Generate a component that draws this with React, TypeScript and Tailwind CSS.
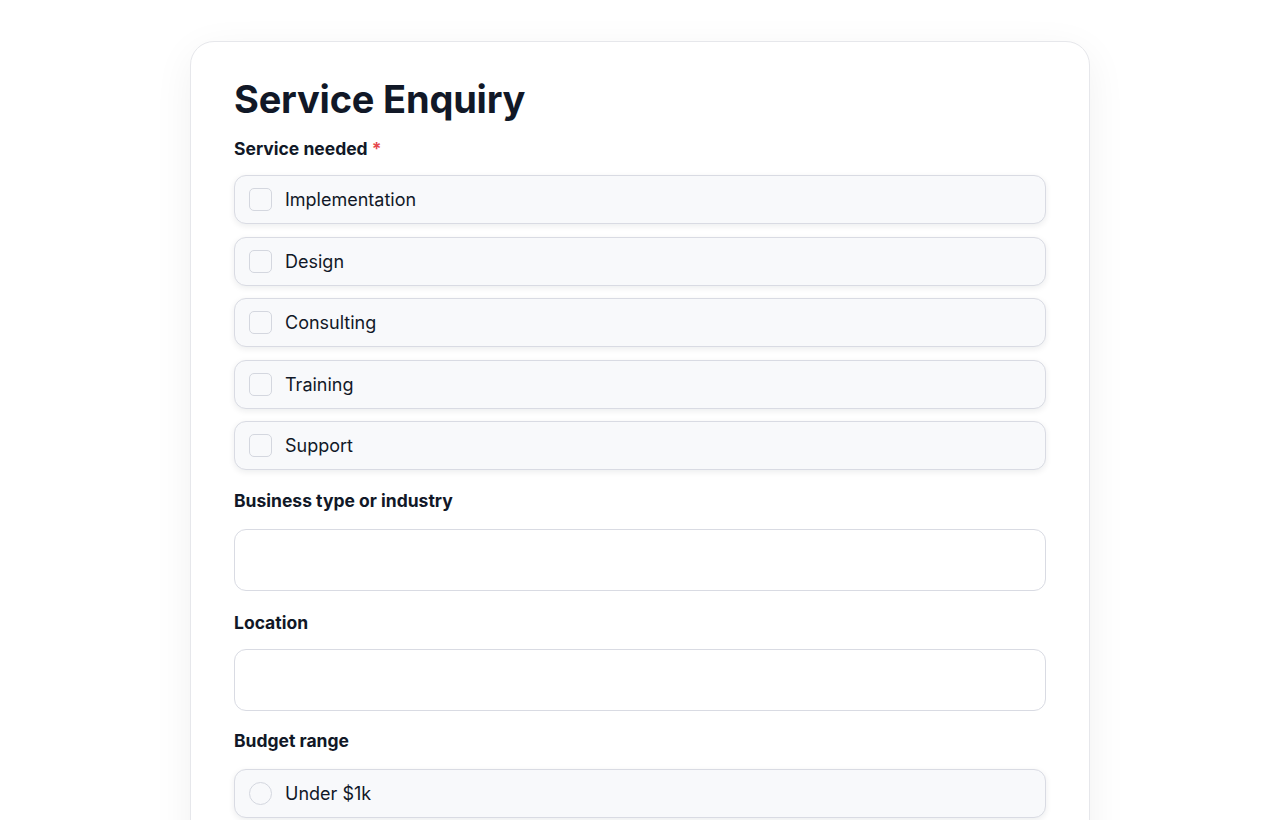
import { useState } from 'react';

const SERVICES = ['Implementation', 'Design', 'Consulting', 'Training', 'Support'];
const BUDGETS = ['Under $1k', '$1k – $5k', '$5k – $10k', 'Over $10k'];

function Label({ children, required }: { children: React.ReactNode; required?: boolean }) {
  return (
    <label className="block text-[17.5px] leading-6 font-bold text-[#111827]">
      {children}
      {required && <span className="text-[#e5484d]"> *</span>}
    </label>
  );
}

function OptionRow({
  label,
  type,
  checked,
  onToggle,
}: {
  label: string;
  type: 'checkbox' | 'radio';
  checked: boolean;
  onToggle: () => void;
}) {
  return (
    <div
      onClick={onToggle}
      className="flex h-[49px] cursor-pointer items-center gap-[13px] rounded-xl border border-[#d9dbe3] bg-[#f8f9fb] px-[14px] shadow-[0_2px_6px_rgba(17,24,39,0.08)]"
    >
      <span
        className={
          type === 'checkbox'
            ? 'h-[23px] w-[23px] rounded-[5px] border border-[#d4d7df] bg-[#f8f9fb]'
            : 'h-[23px] w-[23px] rounded-full border border-[#d4d7df] bg-[#f8f9fb]'
        }
      >
        {checked && <span className="block h-full w-full rounded-[inherit] bg-[#111827]" />}
      </span>
      <span className="text-[18px] text-[#111827]">{label}</span>
    </div>
  );
}

export default function App() {
  const [services, setServices] = useState<string[]>([]);
  const [budget, setBudget] = useState('');

  const toggle = (s: string) =>
    setServices((prev) => (prev.includes(s) ? prev.filter((x) => x !== s) : [...prev, s]));

  return (
    <div className="min-h-screen bg-white pt-[41px]" style={{ fontFamily: 'Inter, "Noto Sans", sans-serif' }}>
      <div className="mx-auto w-[900px] rounded-[24px] border border-[#e6e7eb] bg-white px-[43px] pt-[33px] pb-10 shadow-[0_10px_40px_rgba(17,24,39,0.06)]">
        <h1 className="text-[38px] leading-[48px] font-bold tracking-[-0.2px] text-[#111827]">Service Enquiry</h1>

        <div className="mt-[14px]">
          <Label required>Service needed</Label>
          <div className="mt-[14px] flex flex-col gap-[12.5px]">
            {SERVICES.map((s) => (
              <OptionRow key={s} label={s} type="checkbox" checked={services.includes(s)} onToggle={() => toggle(s)} />
            ))}
          </div>
        </div>

        <div className="mt-[19px]">
          <Label>Business type or industry</Label>
          <input className="mt-[16px] block h-[62px] w-full rounded-xl border border-[#d9dbe3] bg-white px-4 text-[17px] outline-none" />
        </div>

        <div className="mt-[20px]">
          <Label>Location</Label>
          <input className="mt-[14px] block h-[62px] w-full rounded-xl border border-[#d9dbe3] bg-white px-4 text-[17px] outline-none" />
        </div>

        <div className="mt-[18px]">
          <Label>Budget range</Label>
          <div className="mt-[16px] flex flex-col gap-[12.5px]">
            {BUDGETS.map((b) => (
              <OptionRow key={b} label={b} type="radio" checked={budget === b} onToggle={() => setBudget(b)} />
            ))}
          </div>
        </div>
      </div>
    </div>
  );
}
